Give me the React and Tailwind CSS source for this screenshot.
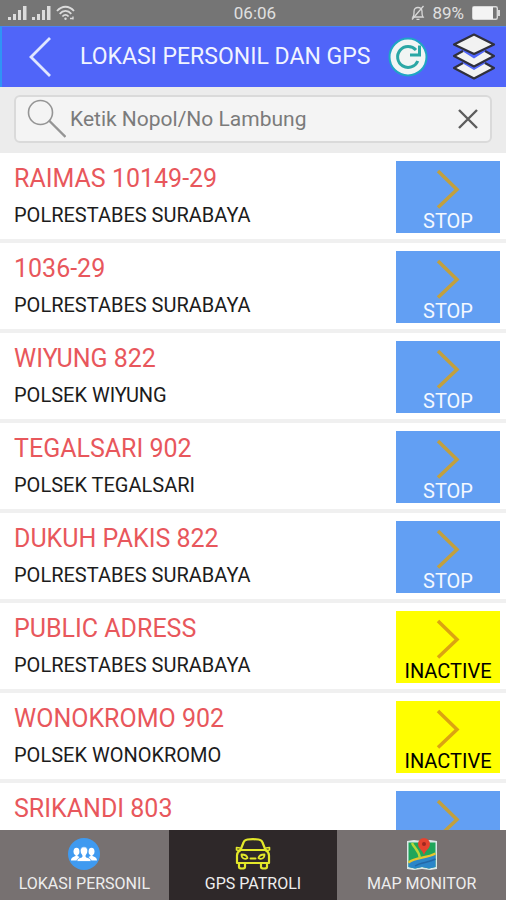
import { useState } from "react";

const patrols = [
  { name: "RAIMAS 10149-29", unit: "POLRESTABES SURABAYA", status: "STOP" },
  { name: "1036-29", unit: "POLRESTABES SURABAYA", status: "STOP" },
  { name: "WIYUNG 822", unit: "POLSEK WIYUNG", status: "STOP" },
  { name: "TEGALSARI 902", unit: "POLSEK TEGALSARI", status: "STOP" },
  { name: "DUKUH PAKIS 822", unit: "POLRESTABES SURABAYA", status: "STOP" },
  { name: "PUBLIC ADRESS", unit: "POLRESTABES SURABAYA", status: "INACTIVE" },
  { name: "WONOKROMO 902", unit: "POLSEK WONOKROMO", status: "INACTIVE" },
  { name: "SRIKANDI 803", unit: "POLRESTABES SURABAYA", status: "STOP" },
];

function SignalIcon() {
  return (
    <svg className="h-4 w-5" viewBox="0 0 20 16" fill="#dcdcdc" aria-hidden="true">
      <rect x="0" y="12" width="3" height="3" />
      <rect x="5" y="9" width="3" height="6" />
      <rect x="10" y="5" width="3" height="10" />
      <rect x="15" y="1" width="3.500" height="14" />
    </svg>
  );
}

function WifiIcon() {
  return (
    <svg className="h-4 w-5" viewBox="0 0 20 16" fill="none" stroke="#dcdcdc" strokeWidth="1.800" aria-hidden="true">
      <path d="M1 6C6 0.300 13 0.300 18 6" />
      <path d="M3.700 8.800C7 5 12 5 15.300 8.800" />
      <path d="M6.400 11.500C8.400 9.300 10.600 9.300 12.600 11.500" />
      <circle cx="9.500" cy="13.800" r="1.200" fill="#dcdcdc" stroke="none" />
      <path d="M14 13.500h2.500M17 11.500v3" strokeWidth="1.300" />
    </svg>
  );
}

function MutedBellIcon() {
  return (
    <svg className="h-4 w-4" viewBox="0 0 16 16" fill="none" stroke="#d8d8d8" strokeWidth="1.300" aria-hidden="true">
      <path d="M3 12h10c-1.200-1.500-1-3-1-5.500C12 4 10.400 2.500 8 2.500S4 4 4 6.500c0 2.500 0.200 4-1 5.500z" />
      <path d="M6.500 14.300h3M2 14.500L13.500 1" />
    </svg>
  );
}

function BatteryIcon() {
  return (
    <svg className="h-4 w-8" viewBox="0 0 32 16" aria-hidden="true">
      <rect x="2.700" y="1.700" width="24.600" height="12.600" rx="1.500" fill="none" stroke="#d8d8d8" strokeWidth="1.400" />
      <rect x="3" y="2" width="20" height="12" fill="#f4f4f4" />
      <path d="M28 5h2v6h-2z" fill="#d8d8d8" />
    </svg>
  );
}

function RefreshIcon() {
  return (
    <svg className="h-10 w-10" viewBox="0 0 40 40" fill="none" aria-hidden="true">
      <circle cx="20" cy="20" r="18.500" fill="#f1f5f4" stroke="#1fa5c4" strokeWidth="2" />
      <path d="M29.800 24A10.500 10.500 0 1 1 28 13" stroke="#2aa7a5" strokeWidth="3" />
      <path d="M31.500 8.500v9.500H22" stroke="#2aa7a5" strokeWidth="3" />
    </svg>
  );
}

function LayersIcon() {
  return (
    <svg className="h-12 w-11" viewBox="0 0 44 48" fill="#f2f2f2" aria-hidden="true">
      <path d="M2 35L11 30.500L22 37L33 30.500L42 35L22 45.500Z" />
      <path d="M11 30L2 35L22 45.500L42 35L33 30" fill="none" stroke="#30303c" strokeWidth="2.200" strokeLinejoin="round" />
      <path d="M2 23L11 18.500L22 25.500L33 18.500L42 23L22 33.500Z" />
      <path d="M11 18L2 23L22 33.500L42 23L33 18" fill="none" stroke="#30303c" strokeWidth="2.200" strokeLinejoin="round" />
      <path d="M2 11.500L22 1.500L42 11.500L22 21Z" stroke="#30303c" strokeWidth="2.200" strokeLinejoin="round" />
    </svg>
  );
}

function SearchIcon() {
  return (
    <svg className="h-10 w-10" viewBox="0 0 40 40" fill="none" stroke="#959595" role="img" aria-label="Cari kendaraan">
      <circle cx="14.500" cy="13.500" r="12" strokeWidth="1.600" />
      <path d="M23 21.500L39.500 38" strokeWidth="2.400" />
    </svg>
  );
}

function PeopleIcon() {
  return (
    <svg className="h-8 w-8" viewBox="0 0 32 32" fill="#fff" aria-hidden="true">
      <circle cx="16" cy="16" r="16" fill="#3f9af0" />
      <ellipse cx="8.500" cy="13.500" rx="3" ry="3.800" />
      <ellipse cx="23.500" cy="13.500" rx="3" ry="3.800" />
      <path d="M3 22.500c0-3 2.500-3.500 4.500-4.500v-2h2v2l2 1-2 3.500zM29 22.500c0-3-2.500-3.500-4.500-4.500v-2h-2v2l-2 1 2 3.500z" />
      <path
        d="M9 23.500c0-3.500 2.500-3.500 5-4.500v-2c-1.200-1-1.800-2.500-1.800-4.200 0-2.400 1.400-4 3.800-4s3.800 1.600 3.800 4c0 1.700-0.600 3.200-1.800 4.200v2c2.500 1 5 1 5 4.500z"
        stroke="#3f9af0"
        strokeWidth="0.800"
      />
    </svg>
  );
}

function CarIcon() {
  return (
    <svg className="h-8 w-9" viewBox="0 0 36 32" fill="none" stroke="#e3e82a" strokeWidth="2.200" strokeLinejoin="round" strokeLinecap="round" aria-hidden="true">
      <path d="M5.500 12L8.500 4.500C9.200 2.300 10.500 1.800 12.500 1.500c3.600-0.400 7.400-0.400 11 0 2 0.300 3.300 0.800 4 3L30.500 12" />
      <path d="M5.500 12h25" strokeWidth="1.800" />
      <path d="M5.500 12C3 13.500 2 15 2 17.500V25h32v-7.500c0-2.500-1-4-3.500-5.500" />
      <path d="M5 10L1.500 9.500v2.500l3 0.500M31 10l3.500-0.500v2.500l-3 0.500" strokeWidth="1.600" />
      <path d="M4 25v4c0 2 6 2 6 0v-4M26 25v4c0 2 6 2 6 0v-4" />
      <path d="M6.500 16.500c3 0 5.500 1 6 3.500-2 1.500-6 1-6-3.500zM29.500 16.500c-3 0-5.500 1-6 3.500 2 1.500 6 1 6-3.500z" strokeWidth="1.800" />
      <path d="M15.500 20.500h5" strokeWidth="2" />
    </svg>
  );
}

function MapIcon() {
  return (
    <svg className="h-8 w-8" viewBox="0 0 32 32" aria-hidden="true">
      <path d="M1 3l7-1 8 1 8-1 7 1v28l-7 1-8-1-8 1-7-1z" fill="#dce8e8" />
      <path d="M2.500 4.500H29.500V29L23 30.500L16 29L9 30.500L2.500 29Z" fill="#1fa65a" />
      <path d="M2.500 25C11 20 20 20 29.500 16V29L23 30.500L16 29L9 30.500L2.500 29Z" fill="#2b86c9" />
      <path d="M9 28c6-4 13-3 20.500-7" stroke="#2368a8" strokeWidth="1.500" fill="none" />
      <path d="M2.500 24.500C10 19 20 20.500 29.500 15.500" stroke="#e9c62e" strokeWidth="2.200" fill="none" />
      <path d="M6 5c2 5 7 7 8 15.500" stroke="#b8d63a" strokeWidth="2.400" fill="none" />
      <path d="M18 17C16.500 12 12 10.500 12 6a6 6 0 0 1 12 0C24 10.500 19.500 12 18 17z" fill="#e5432f" />
      <circle cx="18" cy="6" r="2" fill="#a02820" />
    </svg>
  );
}

const tabs = [
  { id: "personil", label: "LOKASI PERSONIL", Icon: PeopleIcon },
  { id: "patroli", label: "GPS PATROLI", Icon: CarIcon },
  { id: "map", label: "MAP MONITOR", Icon: MapIcon },
];

function PatrolRow({ patrol }) {
  const inactive = patrol.status === "INACTIVE";

  return (
    <li className="flex border-b-4 border-[#f0f0f0] bg-white pt-2 pr-1.5 pb-1.5 pl-3.5">
      <div className="min-w-0 flex-1">
        <h2 className="truncate text-[25px] leading-9 text-[#e8575c]">{patrol.name}</h2>
        <p className="truncate text-[20px] leading-9 text-[#1c1c1c]">{patrol.unit}</p>
      </div>

      <button
        type="button"
        className={
          inactive
            ? "flex h-18 w-26 flex-col items-center bg-[#ffff00] pt-2 text-black"
            : "flex h-18 w-26 flex-col items-center bg-[#629ff3] pt-2 text-[#f4f8ff]"
        }
      >
        <svg
          className="h-10 w-6 shrink-0"
          viewBox="0 0 24 40"
          fill="none"
          stroke={inactive ? "#dba312" : "#c2a03e"}
          strokeWidth="3.500"
          aria-hidden="true"
        >
          <path d="M2 2L21 20.500L2 38.500" />
        </svg>
        <span className="text-[20px] leading-6">{patrol.status}</span>
      </button>
    </li>
  );
}

function App() {
  const [query, setQuery] = useState("");
  const [activeTab, setActiveTab] = useState("patroli");

  const visible = patrols.filter((p) =>
    p.name.toLowerCase().includes(query.toLowerCase())
  );

  return (
    <div className="flex h-screen flex-col bg-white font-['Roboto',sans-serif]">
      {/* Status bar */}
      <div className="grid grid-cols-3 items-center bg-[#757575] pr-1 pl-2 text-[17px] leading-[26px] text-[#e0e0e0]">
        <div className="flex items-center gap-1">
          <SignalIcon />
          <SignalIcon />
          <WifiIcon />
        </div>
        <span className="text-center">06:06</span>
        <div className="flex items-center justify-end gap-1.5">
          <MutedBellIcon />
          <span>89%</span>
          <BatteryIcon />
        </div>
      </div>

      {/* Header */}
      <header className="flex h-[61px] shrink-0 items-center border-t border-l-2 border-t-[#4b83f5] border-l-[#2f95f5] bg-[#5065f9] pr-2.5 pl-6">
        <button type="button" aria-label="Kembali" className="shrink-0">
          <svg className="h-10 w-7" viewBox="0 0 28 40" fill="none" stroke="#dfe6ff" strokeWidth="2.800" aria-hidden="true">
            <path d="M24 1L5 20L24 39" />
          </svg>
        </button>
        <h1 className="ml-6.5 flex-1 text-[23px] leading-8 whitespace-nowrap text-[#f1f4ff]">
          LOKASI PERSONIL DAN GPS
        </h1>
        <div className="flex shrink-0 items-center gap-6">
          <button type="button" aria-label="Muat ulang">
            <RefreshIcon />
          </button>
          <button type="button" aria-label="Lapisan peta">
            <LayersIcon />
          </button>
        </div>
      </header>

      {/* Search */}
      <div className="bg-[#ececec] px-3.5 pt-2 pb-2.5">
        <div className="flex h-12 items-center rounded-md border-2 border-[#dadada] bg-[#f4f4f4] pr-3 pl-2.5">
          <label htmlFor="search" className="shrink-0">
            <SearchIcon />
          </label>
          <input
            id="search"
            type="text"
            value={query}
            onChange={(e) => setQuery(e.target.value)}
            placeholder="Ketik Nopol/No Lambung"
            className="ml-1 min-w-0 flex-1 bg-transparent text-[21px] leading-8 text-[#444444] outline-none placeholder:text-[#7b7b7b]"
          />
          <button type="button" aria-label="Hapus" onClick={() => setQuery("")}>
            <svg className="h-5 w-5" viewBox="0 0 20 20" stroke="#5c5c5c" strokeWidth="2.400" aria-hidden="true">
              <path d="M1 1L19 19M19 1L1 19" />
            </svg>
          </button>
        </div>
      </div>

      {/* Patrol list */}
      <ul className="min-h-0 flex-1 overflow-y-auto [scrollbar-width:none]">
        {visible.map((patrol) => (
          <PatrolRow key={patrol.name} patrol={patrol} />
        ))}
      </ul>

      {/* Bottom tabs */}
      <nav className="grid h-[70px] shrink-0 grid-cols-3">
        {tabs.map(({ id, label, Icon }) => (
          <button
            key={id}
            type="button"
            onClick={() => setActiveTab(id)}
            className={
              id === activeTab
                ? "flex flex-col items-center bg-[#2e2829] pt-2 text-[16px] leading-7 text-[#eeeeee]"
                : "flex flex-col items-center bg-[#777171] pt-2 text-[16px] leading-7 text-[#eeeeee]"
            }
          >
            <Icon />
            {label}
          </button>
        ))}
      </nav>
    </div>
  );
}

export default App;
